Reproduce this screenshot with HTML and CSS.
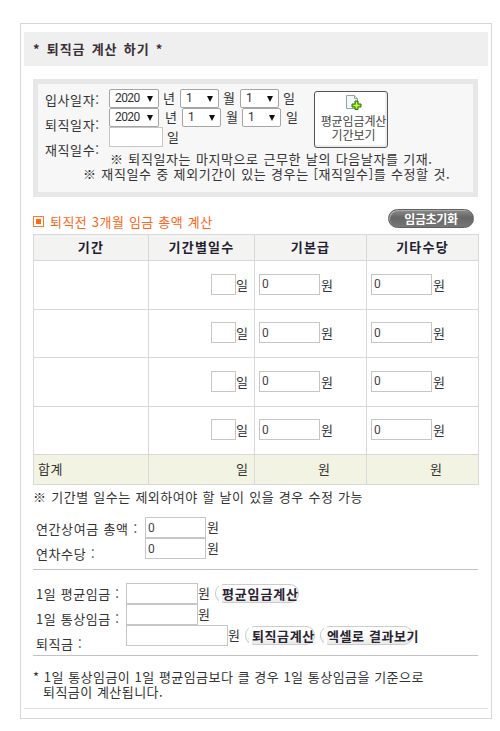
FILE: index.html
```html
<!DOCTYPE html>
<html lang="ko">
<head>
<meta charset="utf-8">
<title>퇴직금 계산 하기</title>
<link rel="stylesheet" href="styles.css">
</head>
<body>
<main class="panel">
  <h1 class="title">* 퇴직금 계산 하기 *</h1>
  <div class="content">
    <section class="dates">
      <div class="dates-form">
        <div class="labels"><div>입사일자:</div><div>퇴직일자:</div><div>재직일수:</div></div>
        <div class="fields">
          <div class="date-row"><span class="select year">2020<i></i></span><b>년</b><span class="select">1<i></i></span><b>월</b><span class="select last">1<i></i></span><b>일</b></div>
          <div class="date-row shifted"><span class="select year">2020<i></i></span><b>년</b><span class="select">1<i></i></span><b>월</b><span class="select last">1<i></i></span><b>일</b></div>
          <div class="date-row days"><input class="box"><b>일</b></div>
        </div>
        <button class="period">
          <svg width="17" height="15" viewBox="0 0 17 15"><path d="M1.5.5h8l3 3v10h-11z" fill="#f3f7fb" stroke="#92a2b5"/><path d="M9.5.5v3h3" fill="#dce5ef" stroke="#92a2b5"/><path d="M10 6h3v3h3v3h-3v2.500h-3V12H7V9h3z" fill="#8bd51c" stroke="#237a0b"/><path d="M11.500 7.500v5.500M8.500 10.500h6" stroke="#e2f82f"/></svg>
          <span>평균임금계산</span><span>기간보기</span>
        </button>
      </div>
      <p class="hint first">※ 퇴직일자는 마지막으로 근무한 날의 다음날자를 기재.</p>
      <p class="hint">※ 재직일수 중 제외기간이 있는 경우는 [재직일수]를 수정할 것.</p>
    </section>

    <div class="wage-head">
      <h2><span class="bullet"></span>퇴직전 3개월 임금 총액 계산</h2>
      <button class="reset">임금초기화</button>
    </div>
    <table>
      <colgroup><col class="c1"><col class="c2"><col class="c3"><col class="c4"></colgroup>
      <thead><tr><th>기간</th><th>기간별일수</th><th>기본급</th><th>기타수당</th></tr></thead>
      <tbody>
        <tr class="r49"><td></td><td><div class="cell right"><input class="box tiny">일</div></td><td><div class="cell"><input class="box" value="0">원</div></td><td><div class="cell"><input class="box" value="0">원</div></td></tr>
        <tr><td></td><td><div class="cell right"><input class="box tiny">일</div></td><td><div class="cell"><input class="box" value="0">원</div></td><td><div class="cell"><input class="box" value="0">원</div></td></tr>
        <tr class="r49"><td></td><td><div class="cell right"><input class="box tiny">일</div></td><td><div class="cell"><input class="box" value="0">원</div></td><td><div class="cell"><input class="box" value="0">원</div></td></tr>
        <tr><td></td><td><div class="cell right"><input class="box tiny">일</div></td><td><div class="cell"><input class="box" value="0">원</div></td><td><div class="cell"><input class="box" value="0">원</div></td></tr>
      </tbody>
      <tfoot><tr><td>합계</td><td><div class="cell right">일</div></td><td class="sum">원</td><td class="sum">원</td></tr></tfoot>
    </table>
    <p class="table-note">※ 기간별 일수는 제외하여야 할 날이 있을 경우 수정 가능</p>

    <section class="bonus">
      <div class="labels"><div>연간상여금 총액 :</div><div>연차수당 :</div></div>
      <div class="fields">
        <div class="line"><input class="box" value="0"><span class="won">원</span></div>
        <div class="line"><input class="box" value="0"><span class="won">원</span></div>
      </div>
    </section>

    <section class="result">
      <div class="labels"><div>1일 평균임금 :</div><div>1일 통상임금 :</div><div>퇴직금 :</div></div>
      <div class="fields">
        <div class="line"><input class="box"><span class="won">원</span><button class="pill avg">평균임금계산</button></div>
        <div class="line"><input class="box"><span class="won">원</span></div>
        <div class="line"><input class="box wide"><span class="won">원</span><button class="pill calc">퇴직금계산</button><button class="pill excel">엑셀로 결과보기</button></div>
      </div>
    </section>
    <div class="footnote"><p>* 1일 통상임금이 1일 평균임금보다 클 경우 1일 통상임금을 기준으로</p><p class="indent">퇴직금이 계산됩니다.</p></div>
  </div>
  <hr>
</main>
</body>
</html>
```
FILE: styles.css
```css
* { box-sizing: border-box; }
body {
  margin: 0;
  padding: 23px 8px 0 20px;
  background: #fff;
  color: #333;
  font: 13px/15px "Noto Sans CJK KR", sans-serif;
  letter-spacing: .6px;
  word-spacing: .5px;
  white-space: nowrap;
}
p, h1, h2 { margin: 0; }
button, input { font-family: inherit; margin: 0; }
.panel { width: 472px; height: 696px; border: 1px solid #d6d6d6; padding: 8px 3px 0; }
.title {
  height: 34px;
  padding-left: 9px;
  background: #efefef;
  color: #3b3035;
  font-size: 13px;
  line-height: 33px;
  letter-spacing: .9px;
  word-spacing: 1.8px;
}
.content { margin: 13px 10px 0 9px; }

.box {
  width: 61px;
  height: 21px;
  flex: none;
  border: 1px solid #c6c6c6;
  border-radius: 0;
  background: #fff;
  padding: 0 2px;
  color: #444;
  font-family: Roboto, sans-serif;
  font-size: 12px;
  letter-spacing: 0;
  outline: 0;
}
.labels { line-height: 25px; }

.dates { height: 118px; border: 5px solid #e7e7e7; background: #f7f7f7; }
.dates-form { display: grid; grid-template-columns: 71px 205px 74px; height: 67px; }
.dates .labels { padding: 3px 0 0 7px; height: 67px; }
.dates .fields { padding-top: 5px; }
.date-row { display: flex; align-items: center; height: 19px; }
.date-row b { width: 21px; padding-left: 4px; font-weight: 400; line-height: 15px; margin-top: -2px; }
.date-row.shifted b { padding-left: 5px; }
.date-row.shifted b:first-of-type { width: 23px; padding-left: 6px; }
.select {
  display: flex;
  justify-content: space-between;
  align-items: center;
  width: 39px;
  height: 19px;
  padding: 0 5px;
  border: 1px solid #a5a5a5;
  border-radius: 2px;
  background: #fff;
  font-family: Roboto, sans-serif;
  font-size: 12px;
  letter-spacing: -.6px;
}
.select.year { width: 50px; }
.select i { border: 3.5px solid transparent; border-top: 6px solid #111; border-bottom: 0; }
.date-row.days { height: 20px; }
.days .box { width: 54px; height: 20px; }
.period {
  display: flex;
  flex-direction: column;
  align-items: center;
  width: 74px;
  height: 57px;
  margin-top: 7px;
  padding: 3px 0 0 5px;
  border: 1px solid #555;
  border-radius: 3px;
  background: #fff;
  box-shadow: inset -2px -2px 0 #eee;
  color: #444;
  font-size: 12px;
  line-height: 14px;
  letter-spacing: -.1px;
}
.period svg { margin-bottom: 4px; flex: none; }
.hint { padding-left: 45px; }
.hint.first { padding-left: 72px; }

.wage-head { display: flex; justify-content: space-between; height: 37px; padding: 12px 4px 0 0; }
.wage-head h2 {
  display: flex;
  align-items: center;
  height: 25px;
  color: #ff6418;
  font-size: 13px;
  font-weight: 400;
  letter-spacing: .45px;
}
.bullet { width: 11px; height: 11px; margin-right: 6px; border: 1px solid #ff7b28; background: #ff6a14; box-shadow: inset 0 0 0 2px #fff; }
.reset {
  width: 86px;
  height: 19px;
  padding: 0;
  border: 1px solid #606060;
  border-radius: 10px;
  background: linear-gradient(#8b8b8b, #666 45%, #777);
  box-shadow: inset 1px 1px 0 #aaa;
  color: #fff;
  font-size: 12px;
  font-weight: 700;
  line-height: 16px;
  letter-spacing: -.3px;
}

table { width: 445px; table-layout: fixed; border-collapse: collapse; }
.c1 { width: 115px; }
.c2 { width: 106px; }
.c3 { width: 112px; }
.c4 { width: 112px; }
th, td { border: 1px solid #d8d8d8; padding: 0; }
th { height: 26px; padding-bottom: 2px; background: #f3f3f1; color: #222030; letter-spacing: 1.2px; }
td { height: 48px; }
.r49 td { height: 49px; }
.cell { display: flex; align-items: center; padding: 0 0 2px 4px; letter-spacing: 0; line-height: 15px; gap: 1px; }
.cell.right { justify-content: flex-end; padding: 0 6px 2px 0; gap: 0; }
.box.tiny { width: 25px; }
tfoot td { height: 30px; padding: 0 0 2px 4px; background: #f3f3e3; }
tfoot .cell.right { padding-bottom: 0; }
tfoot td.sum { padding-left: 63px; }
.table-note { padding-top: 4px; letter-spacing: .52px; }

.bonus { display: grid; grid-template-columns: 112px 1fr; height: 66px; border-bottom: 1px solid #c2c2c2; }
.bonus .labels { padding: 12px 0 0 3px; height: 62px; }
.line { display: flex; align-items: center; height: 21px; }
.bonus .fields { padding-top: 13px; }
.bonus .won { padding-left: 1px; }

.result { display: grid; grid-template-columns: 93px 1fr; height: 86px; border-bottom: 1px solid #c2c2c2; }
.result .labels { padding: 11px 0 0 3px; letter-spacing: .5px; }
.result .fields { padding-top: 13px; }
.result .box { width: 72px; }
.result .box.wide { width: 102px; }
.won { width: 17px; flex: none; margin-top: -2px; }
.pill {
  position: relative;
  height: 19px;
  flex: none;
  padding: 0 0 0 6px;
  border: 1px solid #ccc;
  border-radius: 9px;
  background: linear-gradient(#fff 40%, #e9e9e9);
  color: #282330;
  font-size: 13px;
  font-weight: 700;
  line-height: 16px;
  letter-spacing: .6px;
  text-align: left;
}
/* Gap between the rounded left cap and the button face */
.pill::before { content: ""; position: absolute; left: 3px; top: -1px; width: 3px; height: 19px; background: #fff; }
.avg { width: 84px; letter-spacing: .85px; }
.calc { width: 70px; margin-right: 5px; }
.excel { width: 93px; }
.footnote { height: 52px; padding-top: 13px; letter-spacing: .45px; word-spacing: .2px; }
.indent { padding-left: 10px; }
hr { height: 1px; margin: 0; border: 0; background: #ddd; }
```
